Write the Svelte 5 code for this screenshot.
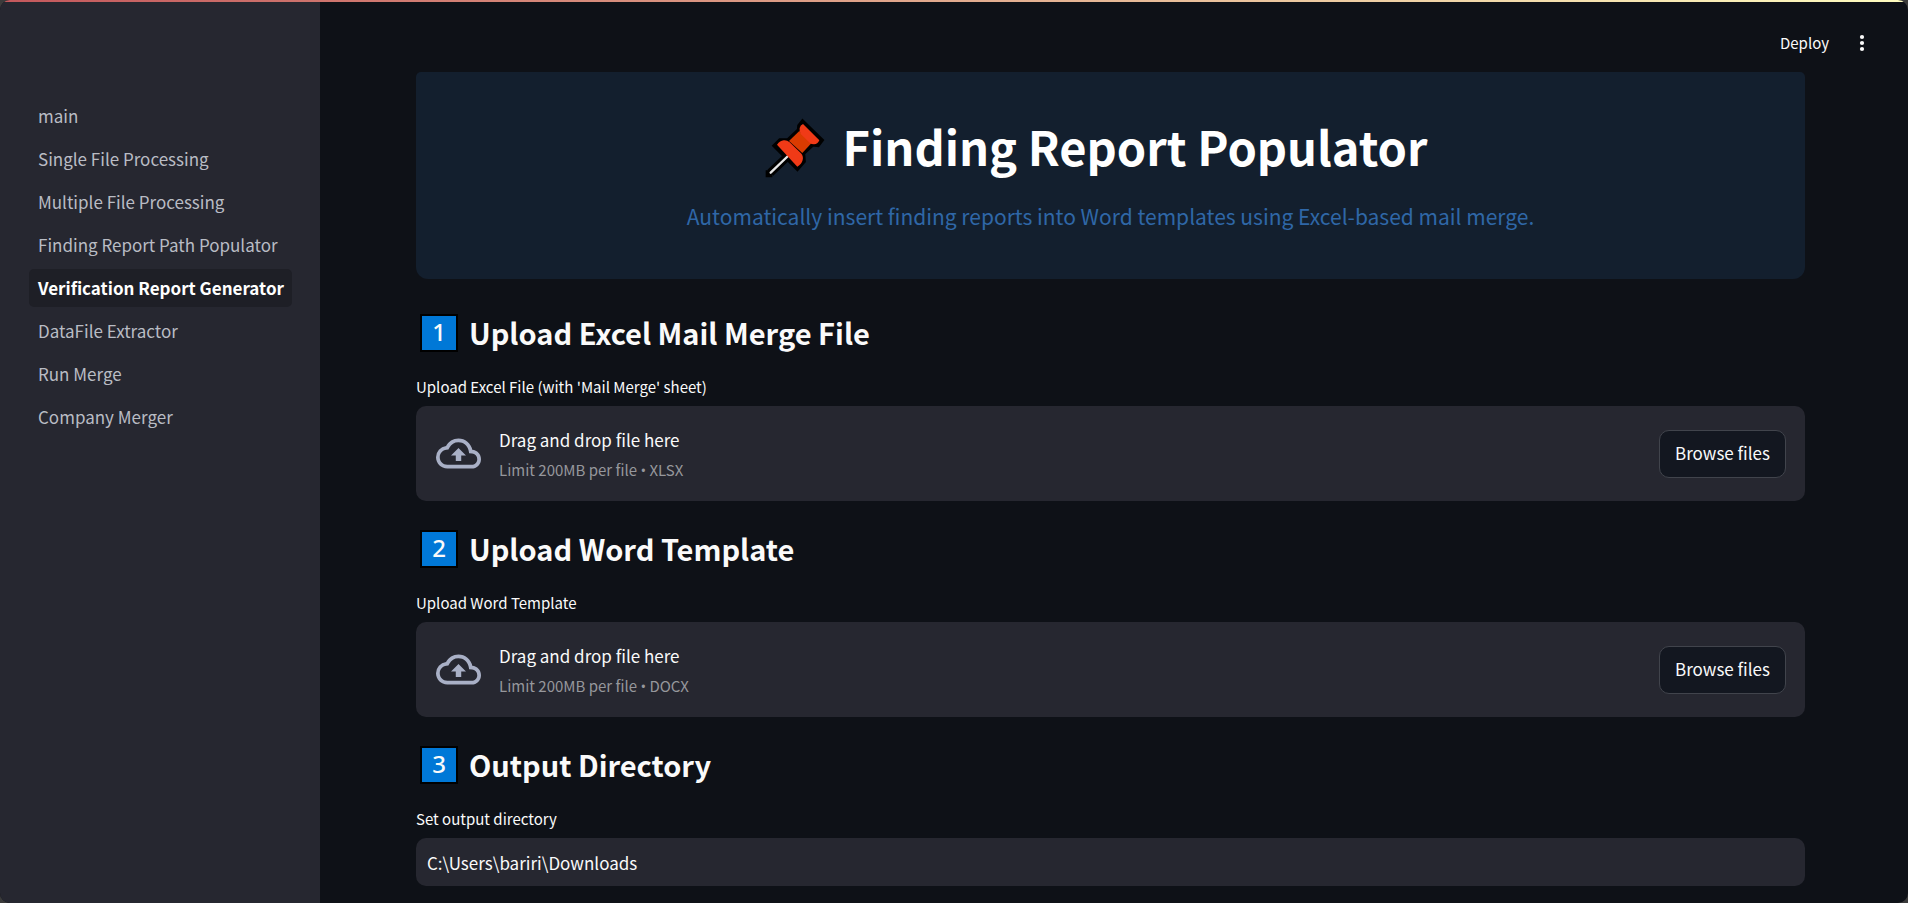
<script>
  const pages = [
    'main',
    'Single File Processing',
    'Multiple File Processing',
    'Finding Report Path Populator',
    'Verification Report Generator',
    'DataFile Extractor',
    'Run Merge',
    'Company Merger'
  ];
  const active = 'Verification Report Generator';

  const uploads = [
    { id: 'excel', step: 1, title: 'Upload Excel Mail Merge File', label: "Upload Excel File (with 'Mail Merge' sheet)", type: 'XLSX' },
    { id: 'word', step: 2, title: 'Upload Word Template', label: 'Upload Word Template', type: 'DOCX' }
  ];

  let directory = $state('C:\\Users\\bariri\\Downloads');
</script>

{#snippet heading(step, title)}
  <h2><span class="keycap">{step}</span>{title}</h2>
{/snippet}

<div class="frame">
  <div class="app">
    <div class="stripe"></div>
    <aside>
      <nav>
        {#each pages as page}
          <a href="#top" class:active={page === active}>{page}</a>
        {/each}
      </nav>
    </aside>

    <div class="content">
      <header>
        <button class="deploy" type="button">Deploy</button>
        <button class="menu" type="button" aria-label="Menu">
          <svg width="6" height="18" viewBox="0 0 6 18" fill="currentColor">
            <circle cx="3" cy="3" r="2.1" /><circle cx="3" cy="9" r="2.1" /><circle cx="3" cy="15" r="2.1" />
          </svg>
        </button>
      </header>

      <main>
        <section class="hero">
          <h1>
            <svg class="pin" width="60" height="60" viewBox="76 83 180 180" aria-hidden="true">
              <g fill="#000" stroke="#000" stroke-width="17" stroke-linejoin="round">
                <path d="M189 97 243 150 234 162 218 160 188 188 190 212 173 232 108 166 122 152 146 152 180 120 181 107Z" stroke-linejoin="miter" />
                <path d="M92 247 145 197" stroke-width="25" />
                <path d="M86 240V253H98" stroke-width="16" stroke-linejoin="miter" />
              </g>
              <path d="M93 247 145 197" stroke="#e6e6e6" stroke-width="7" stroke-linecap="round" />
              <path d="M179 122 215 159 188 188 148 152Z" fill="#da3b01" />
              <path d="M190 101 239 150Q234 162 223 162 215 162 210 157L184 132Q178 124 180 113 182 104 190 101Z" fill="#f03a17" />
              <path d="M112 163Q121 151 132 150 142 149 150 156L184 189Q192 198 189 209 186 221 173 229Z" fill="#f03a17" />
            </svg>
            <span>Finding Report Populator</span>
          </h1>
          <p>Automatically insert finding reports into Word templates using Excel-based mail merge.</p>
        </section>

        {#each uploads as item}
          <section>
            {@render heading(item.step, item.title)}
            <label for={item.id}>{item.label}</label>
            <div class="dropzone">
              <svg width="45" height="45" viewBox="0 0 24 24" fill="currentColor" aria-hidden="true">
                <path d="M19.35 10.04A7.49 7.49 0 0 0 12 4C9.11 4 6.6 5.64 5.35 8.04A5.994 5.994 0 0 0 0 14c0 3.31 2.69 6 6 6h13c2.76 0 5-2.24 5-5 0-2.64-2.05-4.78-4.65-4.96zM19 18H6c-2.21 0-4-1.79-4-4 0-2.05 1.53-3.76 3.56-3.97l1.07-.11.5-.95A5.469 5.469 0 0 1 12 6c2.62 0 4.88 1.86 5.39 4.43l.3 1.5 1.53.11A2.98 2.98 0 0 1 22 15c0 1.65-1.35 3-3 3z" />
                <path d="M8 13h2.55v3h2.9v-3H16l-4-4z" />
              </svg>
              <div class="hint">
                <span>Drag and drop file here</span>
                <small>Limit 200MB per file <span class="bullet">•</span> {item.type}</small>
              </div>
              <button id={item.id} class="browse" type="button">Browse files</button>
            </div>
          </section>
        {/each}

        <section>
          {@render heading(3, 'Output Directory')}
          <label for="directory">Set output directory</label>
          <input id="directory" type="text" bind:value={directory} />
        </section>
      </main>
    </div>
  </div>
</div>

<style>
  :global(body) {
    background: #3b3b3b;
    overflow: hidden;
  }
  .frame {
    font-family: 'Noto Sans CJK SC', 'Noto Sans', sans-serif;
    font-size: 17px;
    color: #fafafa;
  }
  .app {
    position: relative;
    display: flex;
    height: 100vh;
    overflow: hidden;
    border-radius: 10px;
    background: #0e1117;
  }
  .stripe {
    position: absolute;
    inset: 0 0 auto;
    height: 2px;
    background: linear-gradient(90deg, #c4585c, #fffdc0);
  }
  aside {
    flex: 0 0 320px;
    min-width: 0;
    box-sizing: border-box;
    padding: 97px 28px 0 29px;
    background: #262730;
  }
  nav {
    display: flex;
    flex-direction: column;
    gap: 5px;
  }
  nav a {
    padding: 0 9px;
    line-height: 38px;
    border-radius: 5px;
    color: #b9bcc4;
    text-decoration: none;
    white-space: nowrap;
  }
  nav a.active {
    background: #1e1f26;
    color: #fff;
    font-weight: 700;
  }
  .content {
    flex: 1;
    min-width: 0;
  }
  button,
  input {
    font: inherit;
    color: inherit;
  }
  header {
    display: flex;
    justify-content: flex-end;
    align-items: center;
    gap: 10px;
    height: 72px;
    padding: 14px 33px 0 0;
    box-sizing: border-box;
  }
  header button {
    display: flex;
    padding: 0 10px;
    border: 0;
    background: none;
  }
  .deploy {
    font-size: 15px;
    line-height: 28px;
  }
  main {
    padding: 0 103px 16px 96px;
  }
  .hero {
    box-sizing: border-box;
    height: 207px;
    margin-bottom: 6px;
    padding: 40px;
    border-radius: 5px 5px 12px 12px;
    background: #131f2e;
    text-align: center;
  }
  h1 {
    display: flex;
    justify-content: center;
    align-items: center;
    gap: 17px;
    margin: 0;
    padding-right: 28px;
    font-size: 47px;
    line-height: 68px;
    font-weight: 700;
    color: #fff;
  }
  h1 span {
    padding-bottom: 4px;
  }
  .hero p {
    margin: 14px 0 0;
    font-size: 21px;
    line-height: 36px;
    color: #2f67a7;
  }
  h2 {
    display: flex;
    align-items: center;
    gap: 11px;
    margin: 0;
    padding: 25px 0 21px 4px;
    font-size: 29px;
    line-height: 44px;
    font-weight: 600;
  }
  .keycap {
    box-sizing: border-box;
    width: 38px;
    height: 38px;
    margin-top: 2px;
    border: 2px solid #000;
    background: #0078d7;
    font: 500 24px/32px 'Noto Sans', 'Open Sans', sans-serif;
    text-align: center;
  }
  label {
    display: block;
    margin-bottom: 8px;
    padding-top: 1px;
    font-size: 15px;
    line-height: 22px;
  }
  .dropzone {
    display: flex;
    align-items: center;
    gap: 18px;
    box-sizing: border-box;
    height: 95px;
    padding: 0 19px 0 20px;
    border-radius: 10px;
    background: #262730;
  }
  .dropzone svg {
    color: #a9b0c6;
  }
  .hint {
    flex: 1;
    display: flex;
    flex-direction: column;
    padding-top: 2px;
    line-height: 30px;
  }
  .hint small {
    font-size: 15px;
    color: #96979c;
  }
  .bullet {
    font-family: 'Open Sans', sans-serif;
  }
  .browse {
    padding: 0 15px 2px;
    line-height: 44px;
    border: 1px solid #41444c;
    border-radius: 10px;
    background: #131720;
  }
  input {
    display: block;
    box-sizing: border-box;
    width: 100%;
    height: 48px;
    padding: 0 11px;
    border: 0;
    border-radius: 10px;
    outline: 0;
    background: #262730;
  }
</style>
